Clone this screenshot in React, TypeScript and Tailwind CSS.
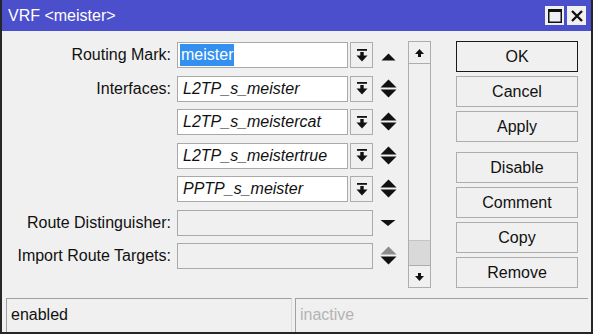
import React from "react";

const FONT = "font-['Liberation_Sans',Arial,Helvetica,sans-serif]";

function DropIcon() {
  return (
    <svg width="12" height="13" viewBox="0 0 12 13">
      <rect x="1" y="0" width="10" height="1.8" fill="#111" />
      <rect x="4.3" y="3" width="3.4" height="4" fill="#111" />
      <polygon points="0.5,6.5 11.5,6.5 6,12.5" fill="#111" />
    </svg>
  );
}

function DropBtn() {
  return (
    <div className="ml-[2px] w-[23px] h-[26px] border border-[#adadad] bg-[#f0f0f0] flex items-center justify-center shrink-0">
      <DropIcon />
    </div>
  );
}

function UpDown({ upColor = "#111" }: { upColor?: string }) {
  return (
    <svg width="17" height="26" viewBox="0 0 17 26" className="block">
      <polygon points="0.5,11.5 8.5,3.5 16.5,11.5" fill={upColor} />
      <polygon points="0.5,13.5 16.5,13.5 8.5,21.5" fill="#111" />
    </svg>
  );
}

function UpOnly() {
  return (
    <svg width="17" height="26" viewBox="0 0 17 26" className="block">
      <polygon points="1.5,18.5 8.5,11.5 15.5,18.5" fill="#111" />
    </svg>
  );
}

function DownOnly() {
  return (
    <svg width="17" height="26" viewBox="0 0 17 26" className="block">
      <polygon points="0.5,10 15.5,10 8,16" fill="#111" />
    </svg>
  );
}

function Row({
  label,
  children,
}: {
  label?: string;
  children: React.ReactNode;
}) {
  return (
    <div className="flex items-center h-[26px]">
      <div className="w-[169px] text-right text-[#111] leading-none shrink-0 whitespace-nowrap">{label}</div>
      <div className="ml-[6px] flex items-center">{children}</div>
    </div>
  );
}

function Field({ text, wide = false, disabled = false }: { text?: string; wide?: boolean; disabled?: boolean }) {
  return (
    <div
      className={`${wide ? "w-[196px]" : "w-[171px]"} h-[26px] border border-[#a9a9a9] ${
        disabled ? "bg-[#f0f0f0]" : "bg-white"
      } flex items-center pl-[5px] italic text-[#111] leading-none shrink-0`}
    >
      {text}
    </div>
  );
}

function Btn({ children, primary = false, className = "" }: { children: React.ReactNode; primary?: boolean; className?: string }) {
  return (
    <div
      className={`w-[122px] h-[31px] border ${
        primary ? "border-[#1a1a1a]" : "border-[#adadad]"
      } bg-[#f0f0f0] flex items-center justify-center text-[#111] leading-none ${className}`}
    >
      {children}
    </div>
  );
}

export default function App() {
  return (
    <div className={`${FONT} text-[16px] w-[593px] h-[334px] flex flex-col bg-[#f0f0f0] border-x-2 border-b-2 border-[#262626] overflow-hidden`}>
      {/* Title bar */}
      <div className="h-[31px] bg-[#4b4fcb] flex items-center shrink-0 -mx-[2px] pl-[8px] pr-[7px]">
        <span className="text-white text-[16px] leading-none">VRF &lt;meister&gt;</span>
        <div className="ml-auto flex items-center gap-[3px]">
          <div className="w-[19px] h-[19px] bg-[#f0f0f0] flex items-center justify-center">
            <svg width="14" height="14" viewBox="0 0 14 14">
              <rect x="0.75" y="0.75" width="12.5" height="12.5" fill="none" stroke="#111" strokeWidth="1.5" />
              <rect x="0" y="0" width="14" height="3" fill="#111" />
            </svg>
          </div>
          <div className="w-[19px] h-[19px] bg-[#f0f0f0] flex items-center justify-center">
            <svg width="12" height="12" viewBox="0 0 12 12">
              <path d="M1 1 L11 11 M11 1 L1 11" stroke="#111" strokeWidth="2.4" />
            </svg>
          </div>
        </div>
      </div>

      {/* Content */}
      <div className="flex pt-[10px]">
        {/* Form */}
        <div className="flex">
          <div className="mt-[1px] flex flex-col gap-[7.5px]">
            <Row label="Routing Mark:">
              <div className="w-[171px] h-[26px] border border-[#a9a9a9] bg-white flex items-center pl-[2px] shrink-0">
                <span className="bg-[#3390f0] text-white leading-none h-[22px] flex items-center px-[1px]">meister</span>
              </div>
              <DropBtn />
              <div className="ml-[7px]"><UpOnly /></div>
            </Row>
            <Row label="Interfaces:">
              <Field text="L2TP_s_meister" />
              <DropBtn />
              <div className="ml-[7px]"><UpDown /></div>
            </Row>
            <Row>
              <Field text="L2TP_s_meistercat" />
              <DropBtn />
              <div className="ml-[7px]"><UpDown /></div>
            </Row>
            <Row>
              <Field text="L2TP_s_meistertrue" />
              <DropBtn />
              <div className="ml-[7px]"><UpDown /></div>
            </Row>
            <Row>
              <Field text="PPTP_s_meister" />
              <DropBtn />
              <div className="ml-[7px]"><UpDown /></div>
            </Row>
            <Row label="Route Distinguisher:">
              <Field wide disabled />
              <div className="ml-[7px]"><DownOnly /></div>
            </Row>
            <Row label="Import Route Targets:">
              <Field wide disabled />
              <div className="ml-[7px]"><UpDown upColor="#8c8c8c" /></div>
            </Row>
          </div>
        </div>

        {/* Scrollbar */}
        <div className="ml-[11px] w-[23px] h-[247px] border border-[#adadad] flex flex-col shrink-0">
          <div className="h-[22px] border-b border-[#adadad] flex items-center justify-center">
            <svg width="9" height="8" viewBox="0 0 9 8">
              <polygon points="0,5 4.5,0 9,5" fill="#111" />
              <rect x="3" y="4" width="3" height="4" fill="#111" />
            </svg>
          </div>
          <div className="flex-1" />
          <div className="h-[25px] bg-[#d9d9d9] border-t border-[#c4c4c4]" />
          <div className="h-[22px] border-t border-[#adadad] flex items-center justify-center">
            <svg width="9" height="8" viewBox="0 0 9 8">
              <rect x="3" y="0" width="3" height="4" fill="#111" />
              <polygon points="0,3 9,3 4.5,8" fill="#111" />
            </svg>
          </div>
        </div>

        {/* Buttons */}
        <div className="ml-[25px] flex flex-col gap-[4px]">
          <Btn primary>OK</Btn>
          <Btn>Cancel</Btn>
          <Btn>Apply</Btn>
          <Btn className="mt-[6px]">Disable</Btn>
          <Btn>Comment</Btn>
          <Btn>Copy</Btn>
          <Btn>Remove</Btn>
        </div>
      </div>

      {/* Status bar */}
      <div className="mt-[10px] flex-1 flex pl-[4px] pr-[3px] gap-[3px]">
        <div className="w-[286px] border-t border-l border-r border-[#a0a0a0] border-r-[#dcdcdc] flex items-center pl-[4px] pb-[2px] text-[#111] leading-none">
          enabled
        </div>
        <div className="flex-1 border-t border-l border-[#a0a0a0] flex items-center pl-[4px] pb-[2px] text-[#b4b4b4] leading-none">
          inactive
        </div>
      </div>
    </div>
  );
}
